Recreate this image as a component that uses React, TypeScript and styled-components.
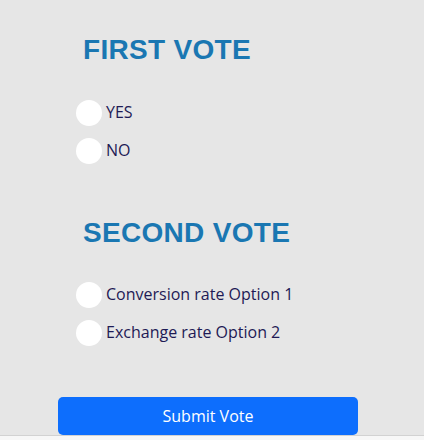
import React from "react";
import styled, { createGlobalStyle } from "styled-components";

const Global = createGlobalStyle`
  html, body { margin: 0; padding: 0; background: #f7f7f7; }
  body { font-family: "Open Sans", "Liberation Sans", Arial, sans-serif; }
`;

const Page = styled.div`
  background: #e6e6e6;
  height: 436px;
  border-bottom: 1px solid #d2d2d2;
  box-sizing: border-box;
  padding-top: 33px;
  display: flex;
  flex-direction: column;
  overflow: hidden;
`;

const Heading = styled.h2<{ $top?: number }>`
  margin: ${(p) => p.$top ?? 0}px 0 0 83px;
  font-family: "Liberation Sans", Arial, sans-serif;
  font-size: 28px;
  line-height: 34px;
  font-weight: 700;
  color: #1a77b2;
  letter-spacing: 0.3px;
`;

const Options = styled.div<{ $top: number }>`
  margin: ${(p) => p.$top}px 0 0 76px;
  display: flex;
  flex-direction: column;
  gap: 12px;
`;

const Row = styled.label`
  display: flex;
  align-items: center;
  gap: 4px;
  height: 26px;
  cursor: pointer;
`;

const Circle = styled.input.attrs({ type: "radio" })`
  appearance: none;
  margin: 0;
  width: 26px;
  height: 26px;
  border-radius: 50%;
  background: #ffffff;
  border: none;
  flex: none;
`;

const Label = styled.span`
  font-family: "Open Sans", "Liberation Sans", Arial, sans-serif;
  font-size: 16px;
  line-height: 20px;
  color: #1e1a55;
  position: relative;
  top: -1px;
`;

const Button = styled.button`
  margin: 51px 0 0 58px;
  width: 300px;
  height: 38px;
  flex: none;
  border: none;
  border-radius: 5px;
  background: #0d6efd;
  color: #ffffff;
  font-family: "Open Sans", "Liberation Sans", Arial, sans-serif;
  font-size: 16px;
  cursor: pointer;
`;

const first = ["YES", "NO"];
const second = ["Conversion rate Option 1", "Exchange rate Option 2"];

export default function App() {
  return (
    <>
      <Global />
      <Page>
        <Heading>FIRST VOTE</Heading>
        <Options $top={33}>
          {first.map((o) => (
            <Row key={o}>
              <Circle name="first" />
              <Label>{o}</Label>
            </Row>
          ))}
        </Options>
        <Heading $top={52}>SECOND VOTE</Heading>
        <Options $top={32}>
          {second.map((o) => (
            <Row key={o}>
              <Circle name="second" />
              <Label>{o}</Label>
            </Row>
          ))}
        </Options>
        <Button>Submit Vote</Button>
      </Page>
    </>
  );
}
